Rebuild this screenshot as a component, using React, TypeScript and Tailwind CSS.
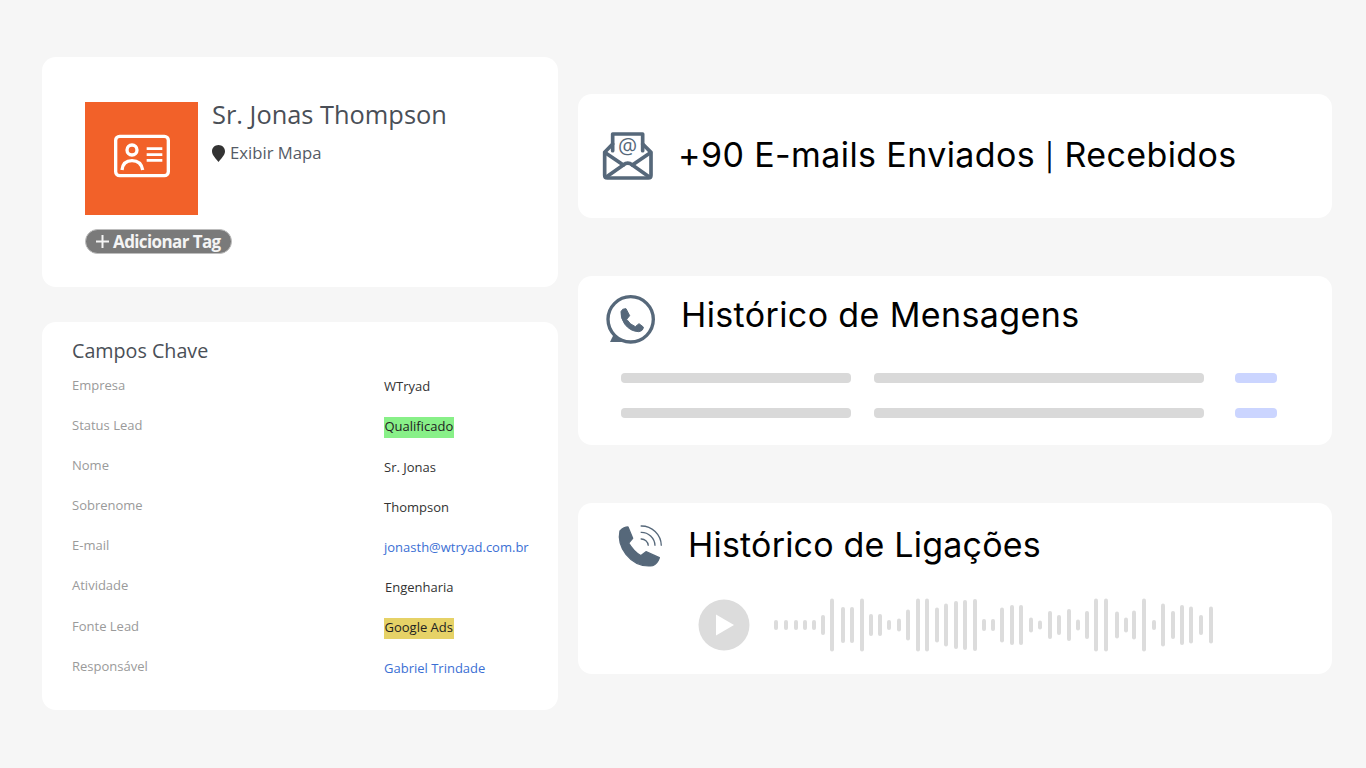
const campos = [
  { label: 'Empresa', value: 'WTryad', kind: 'text' },
  { label: 'Status Lead', value: 'Qualificado', kind: 'green' },
  { label: 'Nome', value: 'Sr. Jonas', kind: 'text' },
  { label: 'Sobrenome', value: 'Thompson', kind: 'text' },
  { label: 'E-mail', value: 'jonasth@wtryad.com.br', kind: 'link' },
  { label: 'Atividade', value: 'Engenharia', kind: 'indent' },
  { label: 'Fonte Lead', value: 'Google Ads', kind: 'yellow' },
  { label: 'Responsável', value: 'Gabriel Trindade', kind: 'link' },
];

// x position, height of each bar of the audio wave
const wave: [number, number][] = [
  [776, 10], [786, 10], [796, 10], [805, 10], [814, 10], [823, 20], [832, 53], [843, 36], [852, 36], [862, 53],
  [871, 22], [880, 22], [889, 10], [899, 13], [908, 31], [918, 53], [927, 53], [937, 35], [946, 43], [956, 48],
  [965, 50], [975, 52], [984, 12], [993, 12], [1002, 35], [1012, 40], [1021, 40], [1031, 15], [1040, 9], [1050, 28],
  [1059, 20], [1069, 32], [1078, 11], [1087, 28], [1096, 53], [1106, 53], [1117, 27], [1126, 15], [1134, 29], [1144, 53],
  [1154, 10], [1163, 43], [1173, 28], [1182, 40], [1191, 37], [1201, 20], [1211, 37],
];

function CampoValue({ value, kind }: { value: string; kind: string }) {
  if (kind === 'green') return <span className="bg-[#88f088] pl-[0.5px] h-[21px] w-[70px] flex items-center text-[#222]">{value}</span>;
  if (kind === 'yellow') return <span className="bg-[#e6d267] pl-[0.5px] h-[21px] w-[70px] flex items-center text-[#222]">{value}</span>;
  if (kind === 'link') return <span className="h-[21px] flex items-center text-[#3b6fd4]">{value}</span>;
  if (kind === 'indent') return <span className="h-[21px] flex items-center pl-[1px] text-[#333]">{value}</span>;
  return <span className="h-[21px] flex items-center text-[#333]">{value}</span>;
}

function IdCardIcon() {
  return (
    <svg width="56" height="44" viewBox="0 0 168 132" fill="none" stroke="#fff" strokeWidth="10">
      <rect x="5" y="7" width="158" height="118" rx="12" />
      <circle cx="54" cy="48" r="15" />
      <path d="M24 108 Q27 80 54 80 Q81 80 86 108" />
      <path d="M98 44H145M98 62H145M98 79H145" strokeWidth="8" />
    </svg>
  );
}

function MailIcon() {
  return (
    <svg width="80" height="70" viewBox="0 0 240 210" fill="none" stroke="#56687a" strokeWidth="11" strokeLinejoin="round" strokeLinecap="round">
      <path d="M68 92V42H158V92" />
      <path d="M68 72L44 97V166Q44 174 52 174H175Q183 174 183 166V97L158 72" />
      <path d="M46 98L100 135Q113 124 127 135L181 98" />
      <path d="M50 170L100 135M177 170L127 135" />
      <text x="113" y="102" textAnchor="middle" fontSize="64" fontFamily="'Open Sans', sans-serif" fill="#56687a" stroke="none">@</text>
    </svg>
  );
}

function WhatsIcon() {
  return (
    <svg width="80" height="70" viewBox="0 0 240 210" fill="none">
      <circle cx="122" cy="103" r="68" stroke="#56687a" strokeWidth="10" />
      <path d="M72 146L60 171H104Z" fill="#56687a" />
      <path d="M93 80Q96 70 108 71L119 92L110 103Q120 119 136 125L147 116L160 126Q160 138 146 140Q120 139 104 117Q91 98 93 80Z" fill="#56687a" stroke="#56687a" strokeWidth="3" strokeLinejoin="round" />
    </svg>
  );
}

function CallIcon() {
  return (
    <svg width="80" height="60" viewBox="0 0 240 180" fill="none">
      <path d="M60 48Q72 36 84 36L98 70L86 84Q100 108 122 122L138 110L178 128Q172 146 158 152Q110 158 78 118Q52 84 60 48Z" fill="#56687a" stroke="#56687a" strokeWidth="4" strokeLinejoin="round" />
      <path d="M122 33A60 60 0 0 1 184 92M122 52A41 41 0 0 1 165 92M122 72A21 21 0 0 1 145 92" stroke="#56687a" strokeWidth="4" />
    </svg>
  );
}

function SkeletonRow() {
  return (
    <div className="flex">
      <div className="ml-[43px] w-[230px] h-[10px] rounded-[4px] bg-[#d9d9d9]" />
      <div className="ml-[23px] w-[330px] h-[10px] rounded-[4px] bg-[#d9d9d9]" />
      <div className="ml-[31px] w-[42px] h-[10px] rounded-[4px] bg-[#cbd5ff]" />
    </div>
  );
}

export default function App() {
  return (
    <div className="w-[1366px] h-[768px] overflow-hidden bg-[#f6f6f6] flex pl-[42px] gap-[20px]">
      <div className="w-[516px] pt-[57px] flex flex-col gap-[35px] font-['Open_Sans',sans-serif]">
        <div className="h-[230px] rounded-[14px] bg-white pl-[43px] pt-[45px]">
          <div className="flex gap-[14px]">
            <div className="w-[113px] h-[113px] bg-[#f26129] flex items-center justify-center pb-[5px]">
              <IdCardIcon />
            </div>
            <div>
              <div className="text-[25.4px] leading-[28px] text-[#4a4f57] -mt-[2px]">Sr. Jonas Thompson</div>
              <div className="flex items-center gap-[5px] mt-[14px] text-[16.7px] leading-[22px] text-[#555b66]">
                <svg width="13" height="17" viewBox="0 0 13 17">
                  <path d="M6.5 17C4 13.5 0 10.5 0 6.3C0 2.8 2.9 0 6.5 0S13 2.8 13 6.3C13 10.500 9 13.500 6.5 17Z" fill="#333" />
                </svg>
                Exibir Mapa
              </div>
            </div>
          </div>
          <div className="mt-[14px] w-[147px] h-[25px] rounded-full bg-[#7a7a7a] border border-[#bdbdbd] flex items-center pl-[9px] gap-[3px] text-[17px] font-bold tracking-[-0.6px] text-[#f4f4f4]">
            <svg width="15" height="15" viewBox="0 0 15 15" stroke="#f4f4f4" strokeWidth="2">
              <path d="M7.500 1V14M1 7.500H14" />
            </svg>
            Adicionar Tag
          </div>
        </div>

        <div className="h-[388px] rounded-[14px] bg-white pl-[30px] pt-[15px]">
          <div className="text-[19.7px] leading-[27px] text-[#4a4f57]">Campos Chave</div>
          <div className="mt-[12.5px]">
            {campos.map((c) => (
              <div key={c.label} className="grid grid-cols-[312px_1fr] h-[40.2px] text-[13px]">
                <div className="leading-[16px] text-[#9a9a9a]">{c.label}</div>
                <CampoValue value={c.value} kind={c.kind} />
              </div>
            ))}
          </div>
        </div>
      </div>

      <div className="w-[754px] pt-[94px] flex flex-col gap-[58px] font-['Inter',sans-serif] text-black">
        <div className="h-[124px] rounded-[14px] bg-white flex pl-[12px] pt-[26px]">
          <MailIcon />
          <div className="ml-[8px] text-[34px] leading-[70px] h-[70px] tracking-[0.4px]">
            +90 E-mails Enviados <span className="text-[27px]">|</span> Recebidos
          </div>
        </div>

        <div className="h-[169px] rounded-[14px] bg-white pt-[9px]">
          <div className="flex pl-[12px]">
            <WhatsIcon />
            <div className="ml-[11px] text-[34px] leading-[60px] h-[60px] tracking-[0.38px]">Histórico de Mensagens</div>
          </div>
          <div className="mt-[18px] flex flex-col gap-[25px]">
            <SkeletonRow />
            <SkeletonRow />
          </div>
        </div>

        <div className="h-[171px] rounded-[14px] bg-white pt-[12px]">
          <div className="flex pl-[22px]">
            <CallIcon />
            <div className="ml-[8px] text-[34px] leading-[60px] h-[60px] tracking-[0.2px]">Histórico de Ligações</div>
          </div>
          <div className="mt-[22px] flex items-center pl-[120px]">
            <svg width="52" height="52" viewBox="0 0 52 52">
              <circle cx="26" cy="26" r="25.500" fill="#dcdcdc" />
              <path d="M18 15.500L36 26L18 36.500Z" fill="#fff" />
            </svg>
            <svg width="450" height="56" viewBox="770 597 450 56" className="ml-[20px]" stroke="#dcdcdc" strokeWidth="4" strokeLinecap="round">
              {wave.map(([x, h]) => (
                <line key={x} x1={x} x2={x} y1={625 - h / 2 + 2} y2={625 + h / 2 - 2} />
              ))}
            </svg>
          </div>
        </div>
      </div>
    </div>
  );
}
